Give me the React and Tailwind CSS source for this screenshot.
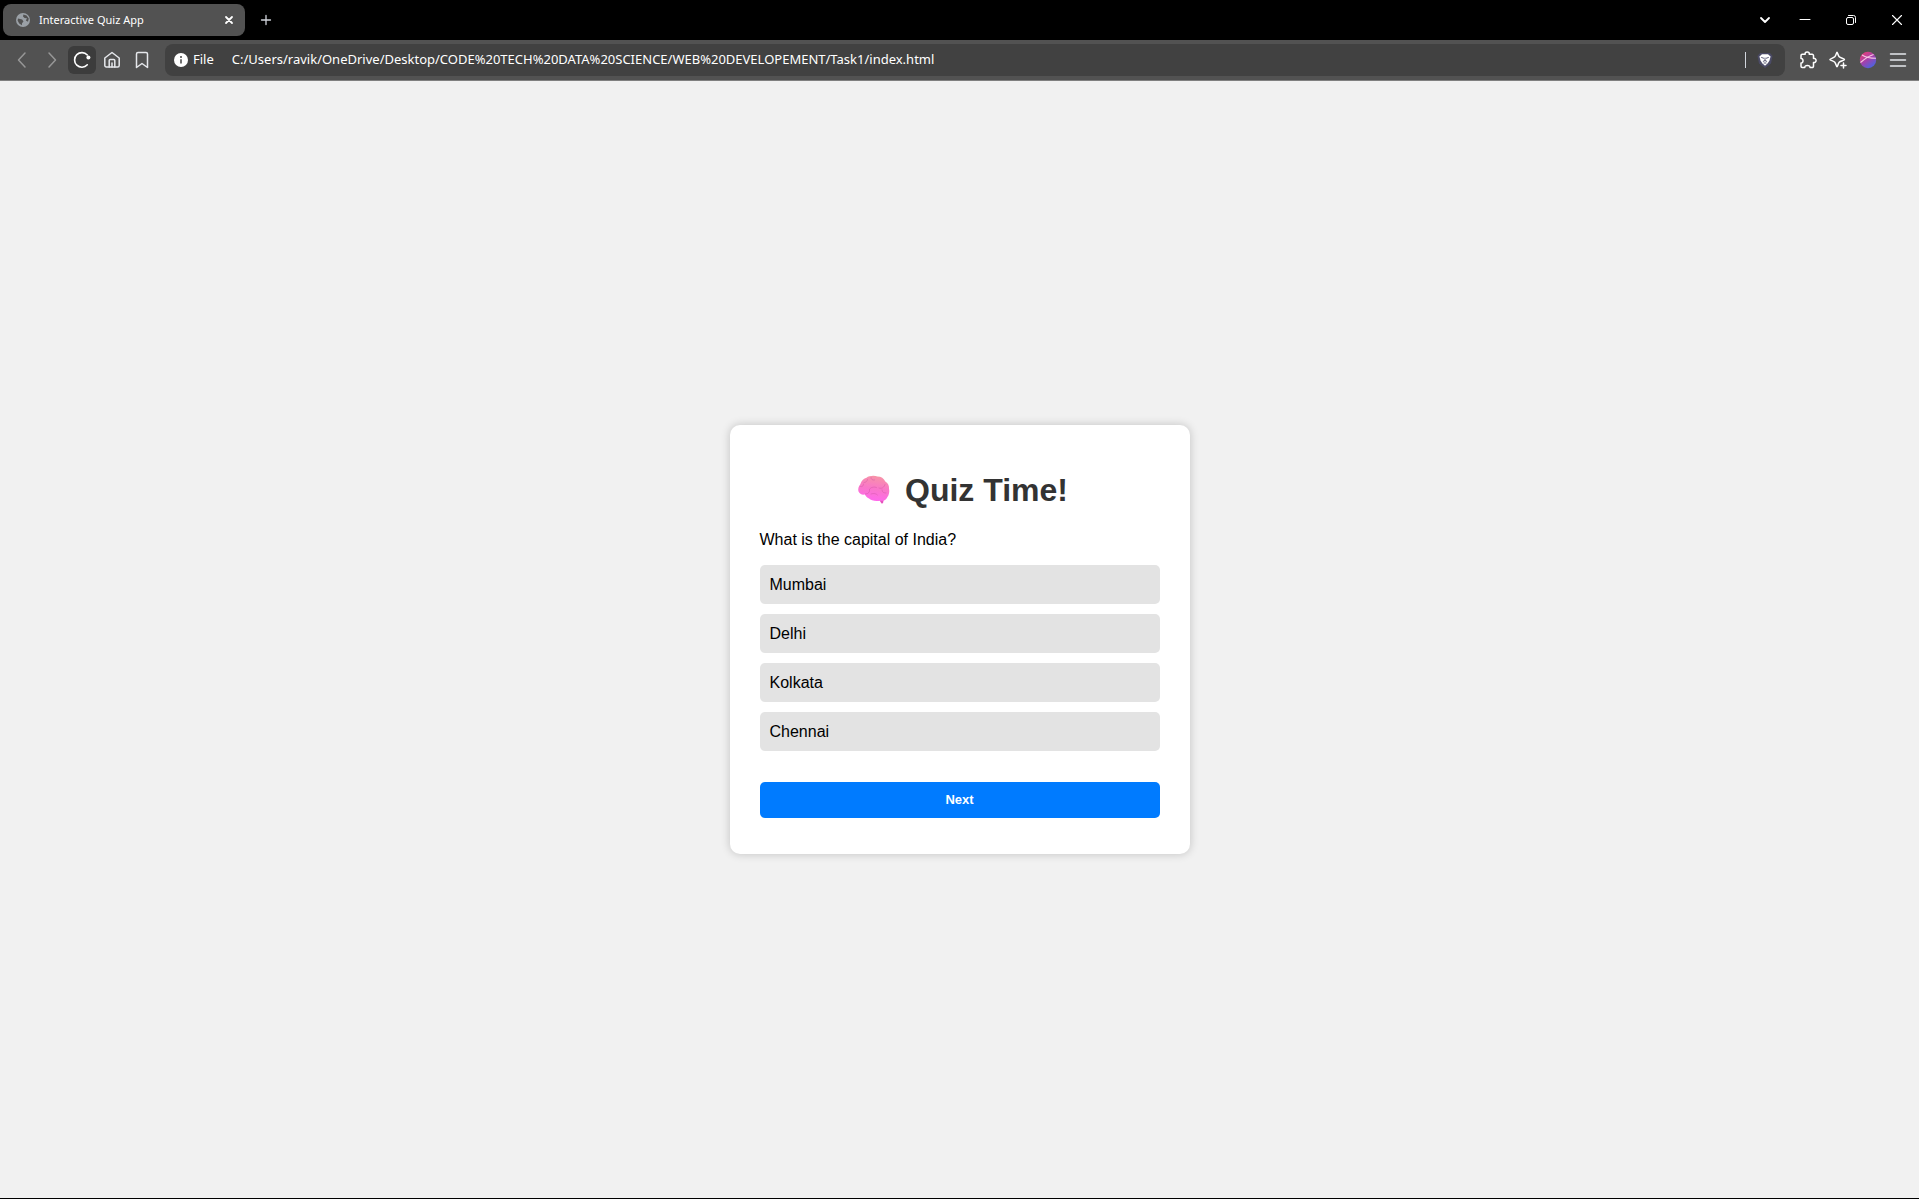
import React from "react";

const options = ["Mumbai", "Delhi", "Kolkata", "Chennai"];

function Icon({ size, children, className = "" }) {
  return (
    <svg
      width={size}
      height={size}
      viewBox={`0 0 ${size} ${size}`}
      fill="none"
      stroke="currentColor"
      strokeWidth="1.5"
      strokeLinecap="round"
      strokeLinejoin="round"
      aria-hidden="true"
      className={className}
    >
      {children}
    </svg>
  );
}

function ToolButton({ label, className = "text-gray-200", children }) {
  return (
    <button type="button" aria-label={label} className={`flex size-7 items-center justify-center rounded-md ${className}`}>
      {children}
    </button>
  );
}

function WindowButton({ label, children }) {
  return (
    <button type="button" aria-label={label} className="flex h-10 w-11 items-center justify-center text-white">
      {children}
    </button>
  );
}

function TabStrip() {
  return (
    <div className="flex h-10 items-center bg-black pl-[3px]">
      <div className="flex h-8 w-[242px] items-center rounded-lg bg-[#525252] pr-2 pl-3">
        <Icon size={16}>
          <circle cx="8" cy="8" r="7" fill="#9aa0a6" stroke="none" />
          <path d="M3 6.5 7.2 7.5 8.5 9.5 7 11.2 7 13.2 4.2 11.6 2.6 8.6Z" fill="#525252" stroke="none" />
          <path d="M8.4 2.6 8 4.6 9.6 6 12 6.2 10.8 8.4 13 9.8 13.8 6.4 11.6 3.4Z" fill="#525252" stroke="none" />
        </Icon>
        <span className="ml-2 flex-1 text-[11px] text-white">Interactive Quiz App</span>
        <button type="button" aria-label="Close tab" className="flex size-4 items-center justify-center text-white">
          <Icon size={10}>
            <path d="M2 2l6 6M8 2l-6 6" strokeWidth="1.8" />
          </Icon>
        </button>
      </div>
      <button type="button" aria-label="New tab" className="ml-[7px] flex size-7 items-center justify-center text-gray-300">
        <Icon size={12}>
          <path d="M6 1.5v9M1.5 6h9" strokeWidth="1.3" />
        </Icon>
      </button>
      <div className="ml-auto flex gap-[2px]">
        <button type="button" aria-label="Search tabs" className="flex h-10 w-8 items-center justify-center text-white">
          <Icon size={12}>
            <path d="M2 4l4 4 4-4" strokeWidth="1.8" />
          </Icon>
        </button>
        <WindowButton label="Minimize">
          <Icon size={12}>
            <path d="M1 5.5h10" strokeWidth="1" />
          </Icon>
        </WindowButton>
        <WindowButton label="Restore">
          <Icon size={12}>
            <rect x="1.5" y="3.5" width="7" height="7" rx="1.5" strokeWidth="1" />
            <path d="M3.5 1.5h5a2 2 0 0 1 2 2v5" strokeWidth="1" />
          </Icon>
        </WindowButton>
        <WindowButton label="Close window">
          <Icon size={12}>
            <path d="M1.5 1.5l9 9M10.5 1.5l-9 9" strokeWidth="1.1" />
          </Icon>
        </WindowButton>
      </div>
    </div>
  );
}

function Toolbar() {
  return (
    <div className="flex h-[41px] items-center gap-[2px] border-b border-[#808080] bg-[#525252] pr-[7px] pl-2">
      <ToolButton label="Back" className="text-[#979797]">
        <Icon size={18}>
          <path d="M12 2L5.5 9L12 16" />
        </Icon>
      </ToolButton>
      <ToolButton label="Forward" className="text-[#979797]">
        <Icon size={18}>
          <path d="M6 2L12.500 9L6 16" />
        </Icon>
      </ToolButton>
      <ToolButton label="Reload" className="bg-[#3c3c3c] text-white">
        <Icon size={18}>
          <path d="M14.300 13.800A7.300 7.300 0 1 1 14.300 4" strokeWidth="1.6" />
          <circle cx="15.400" cy="6.500" r="2" fill="currentColor" stroke="none" />
        </Icon>
      </ToolButton>
      <ToolButton label="Home">
        <Icon size={18}>
          <path d="M1.800 7L9 1.500L16.200 7V14.500a1.500 1.500 0 0 1-1.500 1.500H3.300A1.500 1.500 0 0 1 1.800 14.500Z" />
          <path d="M6.200 16V9.500a1 1 0 0 1 1-1h3.600a1 1 0 0 1 1 1V16M9 12v4" />
        </Icon>
      </ToolButton>
      <ToolButton label="Bookmark">
        <Icon size={18}>
          <path d="M3.500 3a1.500 1.500 0 0 1 1.500-1.500h8A1.500 1.500 0 0 1 14.500 3V16.500L9 12.500L3.500 16.500Z" />
        </Icon>
      </ToolButton>
      <div className="ml-[7px] flex h-8 flex-1 items-center rounded-lg bg-[#414141] pr-3 pl-2 text-white">
        <Icon size={16}>
          <circle cx="8" cy="8" r="7" fill="white" stroke="none" />
          <path d="M8 7.200V11.500" stroke="#414141" strokeLinecap="butt" />
          <circle cx="8" cy="5" r="1" fill="#414141" stroke="none" />
        </Icon>
        <label htmlFor="address" className="ml-1 text-[13px]">
          File
        </label>
        <input
          id="address"
          type="text"
          defaultValue="C:/Users/ravik/OneDrive/Desktop/CODE%20TECH%20DATA%20SCIENCE/WEB%20DEVELOPEMENT/Task1/index.html"
          className="ml-[18px] min-w-0 flex-1 bg-transparent text-[13px] outline-none"
        />
        <span className="mr-[11px] h-4 w-px bg-gray-300" />
        <button type="button" aria-label="Brave Shields" className="flex size-4 items-center justify-center">
          <Icon size={16}>
            <path d="M3 1h10l2.500 3-1.500 7.500L8 16l-6-4.500L.500 4Z" fill="#4b4b66" stroke="none" />
            <path d="M5 2.200h6l2.600 2.300-1.200 4.200L10.500 11.500 8 13.800l-2.500-2.300L3.600 8.700 2.400 4.500Z" fill="white" stroke="none" />
            <path d="M4.600 5.500l2 .7M11.400 5.500l-2 .7M8 6v2.500M6.300 9.300L8 8.600l1.700.7M7 11h2" stroke="#4b4b66" strokeWidth="0.9" />
          </Icon>
        </button>
      </div>
      <div className="ml-[7px] flex items-center gap-[2px]">
        <ToolButton label="Extensions" className="text-white">
          <Icon size={18}>
            <path d="M2 4.500a1.200 1.200 0 0 1 1.200-1.200H6.200C5.800 1.900 6.800.9 8.200.9s2.400 1 2 2.400h3a1.300 1.300 0 0 1 1.300 1.300V7.400c1.400-.2 2.600.6 2.600 2s-1.200 2.300-2.600 2V15.200a1.300 1.300 0 0 1-1.300 1.300H11c.1-1.300-.8-2-2.600-2s-2.700.7-2.600 2H3.200A1.200 1.200 0 0 1 2 15.300V12c1.200.1 2-.8 2-2.300S3.200 7.300 2 7.400Z" />
          </Icon>
        </ToolButton>
        <ToolButton label="Leo AI" className="text-white">
          <Icon size={18}>
            <path d="M8 1.200C8.500 1.200 9 4.500 10.200 5.800S15.500 7.500 15.500 8.500 11.500 9.800 10.200 11.200 8.700 15.800 8 15.800 7 12.500 5.800 11.200.9 9.300.9 8.500 4.500 7.100 5.800 5.800 7.500 1.200 8 1.200Z" />
            <path d="M14.500 12v5M12 14.500h5" />
          </Icon>
        </ToolButton>
        <ToolButton label="Profile">
          <svg width="18" height="18" viewBox="0 0 18 18" aria-hidden="true">
            <defs>
              <linearGradient id="avatar" x1="0.1" y1="0" x2="0.8" y2="1">
                <stop offset="0.1" stopColor="#e0407e" />
                <stop offset="0.5" stopColor="#a341ab" />
                <stop offset="0.9" stopColor="#5360dc" />
              </linearGradient>
            </defs>
            <circle cx="9" cy="9" r="8.200" fill="url(#avatar)" />
            <path d="M3 4C7 6.500 12 7.300 17 7.300M1.500 11.500C5.500 8 9.500 5 14.500 3.500" fill="none" stroke="#f8c6e4" strokeWidth="1.100" />
          </svg>
        </ToolButton>
        <ToolButton label="Menu">
          <Icon size={18}>
            <path d="M1.500 3h15M1.500 9h15M1.500 15h15" />
          </Icon>
        </ToolButton>
      </div>
    </div>
  );
}

function Brain() {
  return (
    <svg width="34" height="32" viewBox="0 0 34 32" fill="none" aria-hidden="true">
      <defs>
        <linearGradient id="brain" x1="0.6" y1="0" x2="0.4" y2="1">
          <stop offset="0" stopColor="#f794a6" />
          <stop offset="0.500" stopColor="#f977c9" />
          <stop offset="1" stopColor="#ff68ee" />
        </linearGradient>
      </defs>
      <path d="M21 24l3.500 5.500 1.500-.3 1-5.200Z" fill="#e552bd" />
      <path
        d="M1.500 17.500C.8 15 1.500 12.500 3.200 10.500 4.500 6.500 7 4.500 9.500 3.800 12 1.800 17 1.200 20.500 2.600c3.500 0 6.500 2 7.800 4.900 3 2 4 4.500 3.700 7 .8 3.500 0 6.500-1.700 8.700-1 2.800-4 4-7.300 3.500-4 .6-9 .3-11-2.100C10 23.500 8.500 22 7.800 20.500 5 21 2.500 20 1.500 17.500Z"
        fill="url(#brain)"
      />
      <path
        d="M3.500 12.500c2 .8 3-.7 3-2.500M7 8.500c2 0 3-1 3.500-3M14 3.500c0 2 1.500 3 3.500 2.500M8.500 20c3 0 4.500-2 4-5 2-2 5-2.500 7-1.500M22 14c3 1 5-.5 6-3.500M14 20c3-1 5-.5 6.500 1M25 16c0 2.500 2 3 4 3"
        stroke="#d055a5"
        strokeOpacity="0.5"
        strokeWidth="0.9"
        strokeLinecap="round"
      />
    </svg>
  );
}

function QuizCard() {
  return (
    <section className="w-[460px] rounded-[10px] bg-white px-[30px] pt-[47px] pb-9 font-['Liberation_Sans',Arial,sans-serif] text-base text-black shadow-[0_0_10px_rgba(0,0,0,0.2)]">
      <h1 className="flex items-center justify-center gap-[14px] pl-1.5 text-[32px] leading-9 font-bold text-[#333]">
        <Brain />
        Quiz Time!
      </h1>
      <p id="question" className="mt-[19px] leading-[26px]">
        What is the capital of India?
      </p>
      <ul aria-labelledby="question" className="mt-3 flex flex-col gap-[10px]">
        {options.map((option) => (
          <li key={option}>
            <button type="button" className="block h-[39px] w-full rounded-[5px] bg-[#e3e3e3] px-[10px] text-left">
              {option}
            </button>
          </li>
        ))}
      </ul>
      <button type="button" className="mt-[31px] h-9 w-full rounded-[5px] bg-[#007bff] text-[13px] font-bold text-white">
        Next
      </button>
    </section>
  );
}

export default function App() {
  return (
    <div className="flex min-h-screen flex-col border-b border-black bg-[#f1f1f1] font-['Noto_Sans','Open_Sans',sans-serif]">
      <header>
        <TabStrip />
        <Toolbar />
      </header>
      <main className="flex flex-1 items-center justify-center">
        <QuizCard />
      </main>
    </div>
  );
}
